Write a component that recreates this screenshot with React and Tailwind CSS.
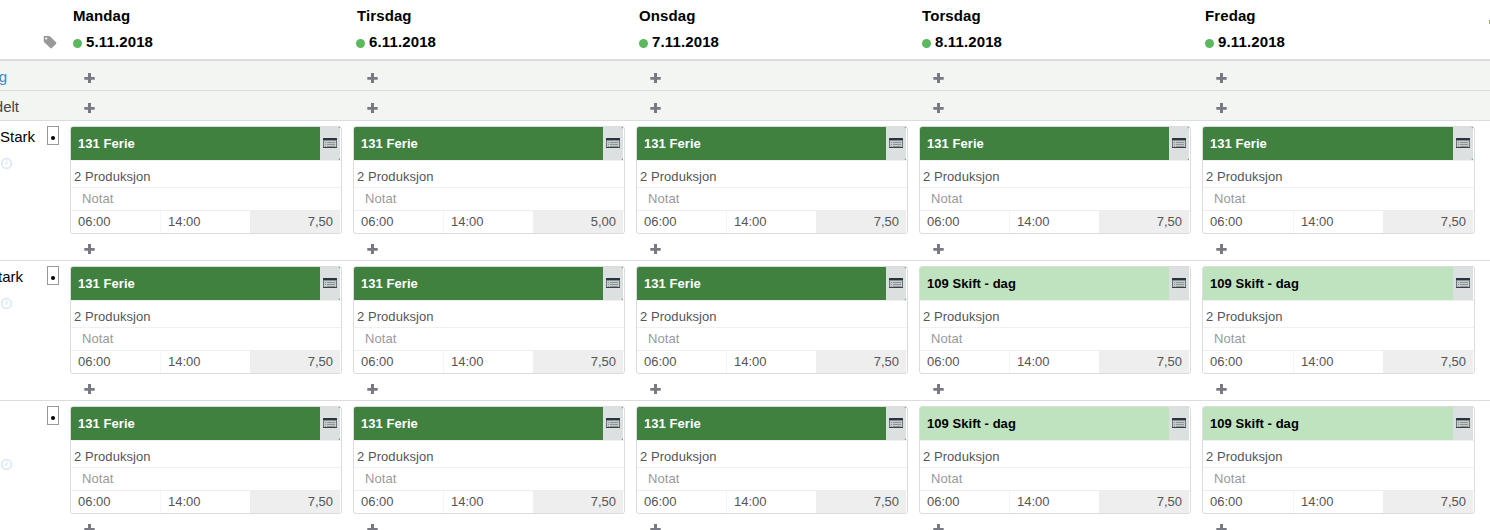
import React from 'react';

const days = [
    { name: 'Mandag', date: '5.11.2018' },
    { name: 'Tirsdag', date: '6.11.2018' },
    { name: 'Onsdag', date: '7.11.2018' },
    { name: 'Torsdag', date: '8.11.2018' },
    { name: 'Fredag', date: '9.11.2018' },
];

const ferie = { title: '131 Ferie', dark: true, hours: '7,50' };
const skift = { title: '109 Skift - dag', dark: false, hours: '7,50' };

const employees = [
    { name: 'Stark', shifts: [ferie, { ...ferie, hours: '5,00' }, ferie, ferie, ferie] },
    { name: 'tark', shifts: [ferie, ferie, ferie, skift, skift] },
    { name: '', shifts: [ferie, ferie, ferie, skift, skift] },
];

function PlusIcon() {
    return (
        <svg className="block shrink-0" width="11" height="12" viewBox="0 0 11 12" fill="#777a82">
            <path d="M4 1h3v4h3.700v2.800H7V11H4V7.800H.3V5H4z" />
        </svg>
    );
}

function TagIcon() {
    return (
        <svg className="block" width="14" height="14" viewBox="0 0 14 14" fill="#999">
            <path fillRule="evenodd" d="M1.200 1h4.600c.6 0 1.100.2 1.500.6l5.700 5.700c.5.5.5 1.100 0 1.600l-4.100 4.100c-.5.5-1.100.5-1.600 0L1.400 7.400C1 7 .7 6.500.7 5.900V1.500c0-.3.2-.5.5-.5zM3.200 2.400a1.100 1.100 0 1 0 0 2.200 1.100 1.100 0 0 0 0-2.200z" />
        </svg>
    );
}

function ClockIcon() {
    return (
        <svg className="block" width="13" height="13" viewBox="0 0 13 13" fill="none" stroke="#dbe8f5" strokeWidth="1.7">
            <circle cx="6.5" cy="6.5" r="4.8" />
            <path d="M6.900 3.500V7H4.200" strokeWidth="1.200" />
        </svg>
    );
}

function ListIcon() {
    return (
        <svg className="block" width="14" height="12" viewBox="0 0 14 12">
            <rect x="0" y="1" width="14" height="10" rx="1" fill="#6b767c" />
            <rect x="0" y="1" width="14" height="2" rx=".5" fill="#263541" />
            <rect x="1" y="3" width="12" height="7" fill="#c6caca" />
            <rect x="1" y="3" width="12" height="1" fill="#8b9492" />
            <path d="M2 5h1v1H2zM4 5h8v1H4zM2 7h1v1H2zM4 7h8v1H4zM2 9h1v1H2zM4 9h8v1H4z" fill="#8f9595" />
            <rect x="0" y="10" width="14" height="1" fill="#35424a" />
        </svg>
    );
}

function ShiftCard({ shift, wide }) {
    return (
        <div className={`h-[108px] overflow-hidden rounded-[3px] border border-[#dcdcdc] bg-white text-[13px] text-[#555] ${wide ? 'w-[273px]' : 'w-[272px]'}`}>
            <div className={`mr-px flex h-[33px] ${shift.dark ? 'bg-[#408140] text-white' : 'bg-[#bfe3bf] text-black'}`}>
                <div className="flex-1 pl-[7px] font-bold leading-[33px] tracking-[0.05px]">{shift.title}</div>
                <div className="flex w-5 justify-center rounded-r-[2px] bg-[#dce0e0] pt-[10px]">
                    <ListIcon />
                </div>
            </div>
            <div className="h-[28px] border-y border-[#f0f0f0] pl-[3px] leading-[32px] tracking-[0.06px]">2 Produksjon</div>
            <div className="h-[22px] pl-[11px] leading-[21px] tracking-[0.1px] text-[#999]">Notat</div>
            <div className="flex h-[23px] border-t border-[#eee] pr-px leading-[21px]">
                <div className={`border-r border-[#f5f5f5] pl-[7px] ${wide ? 'w-[91px]' : 'w-[90px]'}`}>06:00</div>
                <div className="w-[89px] pl-[7px]">14:00</div>
                <div className="flex-1 bg-[#eee] pr-[7px] text-right">{shift.hours}</div>
            </div>
        </div>
    );
}

function AddRow({ children }) {
    return (
        <div className="flex h-[30px] border-b border-[#dcdcdc] bg-[#f3f5f3]">
            <div className="flex w-[70px] shrink-0 text-[15px] leading-[32px]">{children}</div>
            {days.map((day) => (
                <div key={day.name} className="w-[283px] shrink-0 pl-[14px] pt-[11px]">
                    <PlusIcon />
                </div>
            ))}
        </div>
    );
}

export default function App() {
    return (
        <div className="h-[530px] w-[1490px] overflow-hidden bg-white font-['Liberation_Sans',Arial,sans-serif] text-black">
            {/* Header */}
            <div className="flex h-[61px] border-b-2 border-[#dcdcdc]">
                <div className="w-[70px] shrink-0 pl-[43px] pt-[35px]">
                    <TagIcon />
                </div>
                {days.map((day, i) => (
                    <div key={day.name} className="w-[283px] shrink-0 pt-[3px] text-[15px] font-bold leading-[26px]">
                        <div className={`tracking-[0.1px] ${i === 1 ? 'pl-1' : 'pl-[3px]'}`}>{day.name}</div>
                        <div className="flex items-center pl-[3px] tracking-[0.13px]">
                            <span className="mr-1 mt-[3px] h-[9px] w-[9px] rounded-full bg-[#5cb85c]" />
                            {day.date}
                        </div>
                    </div>
                ))}
                <div className="flex flex-1 justify-end pt-[20px]">
                    <span className="h-[4px] w-px bg-[#a3b34a]" />
                </div>
            </div>

            {/* Unassigned rows */}
            <AddRow>
                <div className="flex w-[7px] justify-end text-[#4484c9]">
                    <span>g</span>
                </div>
            </AddRow>
            <AddRow>
                <div className="flex w-[19px] justify-end text-[#444]">
                    <span>delt</span>
                </div>
            </AddRow>

            {/* Employees */}
            {employees.map((employee, row) => (
                <div key={row} className="flex h-[140px] border-b border-[#dcdcdc] pt-[5px]">
                    <div className="flex w-[70px] shrink-0 justify-between pr-[11px]">
                        <div className="text-[15px] leading-[22px]">
                            <div className={`flex h-[22px] justify-end ${row === 1 ? 'w-[23px]' : 'w-[35px]'}`}>
                                <span>{employee.name}</span>
                            </div>
                            <div className={row === 2 ? 'pt-[30px]' : 'pt-[9px]'}>
                                <ClockIcon />
                            </div>
                        </div>
                        <div className="flex h-[19px] w-3 items-end justify-center border border-[#999] pb-1">
                            <span className="h-1 w-1 rounded-full bg-black" />
                        </div>
                    </div>
                    {employee.shifts.map((shift, i) => (
                        <div key={i} className="w-[283px] shrink-0">
                            <ShiftCard shift={shift} wide={i === 4} />
                            <div className="pl-[14px] pt-[9px]">
                                <PlusIcon />
                            </div>
                        </div>
                    ))}
                </div>
            ))}
        </div>
    );
}
